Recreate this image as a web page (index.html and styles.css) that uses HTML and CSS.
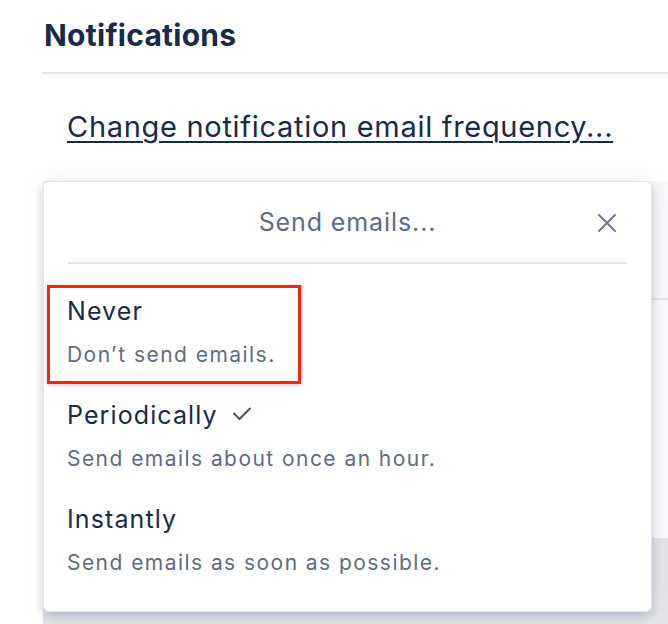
FILE: index.html
```html
<!DOCTYPE html>
<html lang="en">
<head>
<meta charset="utf-8">
<title>Notifications</title>
<link rel="stylesheet" href="styles.css">
</head>
<body>
<main class="page">
  <h1 class="heading">Notifications</h1>
  <div class="divider"></div>
  <div class="link-row">
    <a class="freq-link" href="#">Change notification email frequency...</a>
  </div>
  <section class="settings">
    <div class="settings-row"></div>
    <div class="settings-row settings-row-tall"></div>
    <div class="settings-footer"></div>

    <div class="popover" role="dialog" aria-label="Send emails">
      <div class="popover-header">
        <span class="popover-title">Send emails...</span>
        <button class="close" aria-label="Close">
          <svg width="20" height="20" viewBox="0 0 20 20"><path d="M2 2 L18 18 M18 2 L2 18" stroke="#6b778c" stroke-width="2" stroke-linecap="round" fill="none"/></svg>
        </button>
      </div>
      <ul class="options">
        <li class="option">
          <div class="option-title">Never</div>
          <div class="option-desc">Don’t send emails.</div>
        </li>
        <li class="option">
          <div class="option-title">Periodically
            <svg class="check" width="20" height="15" viewBox="0 0 20 15"><path d="M2 7.5 L7.5 13 L18 2.5" stroke="#42526e" stroke-width="2" stroke-linecap="round" stroke-linejoin="round" fill="none"/></svg>
          </div>
          <div class="option-desc">Send emails about once an hour.</div>
        </li>
        <li class="option">
          <div class="option-title">Instantly</div>
          <div class="option-desc">Send emails as soon as possible.</div>
        </li>
      </ul>
      <div class="highlight"></div>
    </div>
  </section>
</main>
</body>
</html>
```

FILE: styles.css
```css
* { box-sizing: border-box; }
html, body { margin: 0; padding: 0; background: #ffffff; }
body {
  font-family: Inter, "Noto Sans", sans-serif;
  color: #172b4d;
  width: 668px;
  height: 624px;
  overflow: hidden;
}
.page { padding-left: 43px; }
.heading {
  margin: 0;
  padding-top: 16px;
  height: 72px;
  font-size: 30px;
  font-weight: 700;
  line-height: 38px;
  letter-spacing: 0.25px;
  padding-left: 1px;
}
.divider { height: 2px; background: #e4e5e8; }
.link-row { padding: 34px 0 0 24px; height: 107px; }
.freq-link {
  font-size: 29px;
  line-height: 38px;
  letter-spacing: 0.7px;
  color: #172b4d;
  text-decoration: underline;
  text-decoration-thickness: 2px;
  text-underline-offset: 4px;
}
.settings { position: relative; height: 443px; }
.settings-row { height: 119px; border-bottom: 2px solid #e1e2e6; background: #f7f8fa; }
.settings-row-tall { height: 238px; border-bottom: 0; background: #f9f9fb; }
.settings-footer { height: 86px; background: #e3e4e9; }
.popover {
  position: absolute;
  left: 0;
  top: 0;
  width: 609px;
  height: 431px;
  background: #ffffff;
  border: 1px solid #e4e5e9;
  border-radius: 6px;
  box-shadow: 0 4px 10px rgba(9, 30, 66, 0.18), 0 0 24px rgba(9, 30, 66, 0.06);
}
.popover-header {
  position: relative;
  margin: 0 24px;
  height: 82px;
  border-bottom: 2px solid #e4e5e8;
  display: flex;
  align-items: center;
  justify-content: center;
}
.popover-title {
  font-size: 25px;
  color: #5e6c84;
  letter-spacing: 0.9px;
}
.close {
  position: absolute;
  right: 10px;
  top: 31px;
  padding: 0;
  border: 0;
  background: none;
  width: 20px;
  height: 20px;
}
.close svg { display: block; }
.options { list-style: none; margin: 0; padding: 14px 0 22px 0; }
.option { padding: 17px 23px 13px 23px; height: 104px; }
.option-title {
  font-size: 25px;
  line-height: 32px;
  letter-spacing: 1.1px;
  color: #172b4d;
  display: flex;
  align-items: center;
  gap: 14px;
}
.option-desc {
  margin-top: 14px;
  font-size: 21px;
  line-height: 28px;
  color: #5e6c84;
  letter-spacing: 1.45px;
}
.check { display: block; margin-top: -4px; }
.highlight {
  position: absolute;
  left: 3px;
  top: 103px;
  width: 254px;
  height: 99px;
  border: 3px solid #f5260b;
  box-shadow: 0 1px 4px rgba(0, 0, 0, 0.25);
  pointer-events: none;
}
```
